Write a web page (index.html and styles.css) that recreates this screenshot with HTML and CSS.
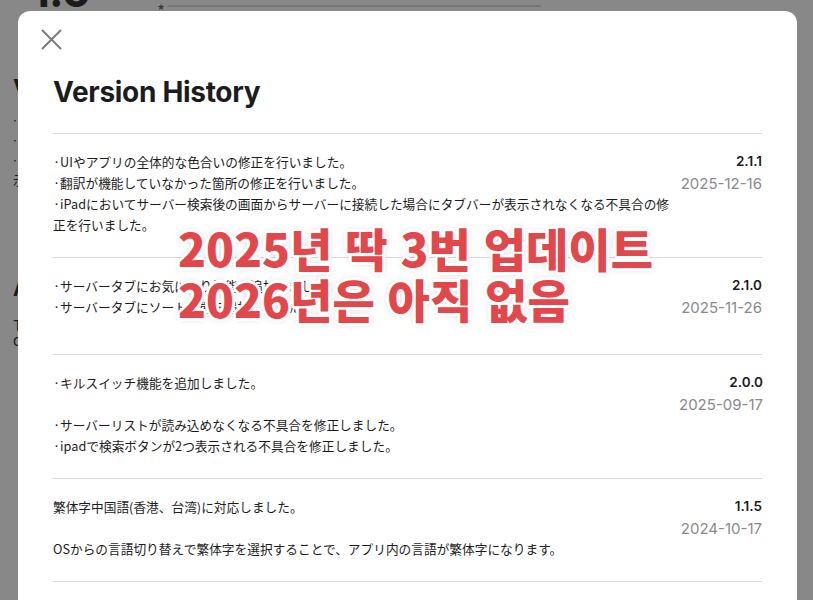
FILE: index.html
```html
<!DOCTYPE html>
<html lang="ja">
<head>
<meta charset="utf-8">
<title>Version History</title>
<link rel="stylesheet" href="styles.css">
</head>
<body>
  <div class="bg-page">
    <div class="bg-stats">
      <div class="bg-rating">1.0</div>
      <div class="bg-star">★</div>
      <div class="bg-bar"></div>
    </div>
    <div class="bg-body">
      <h2 class="bg-heading">Version History</h2>
      <div class="bg-text">·</div>
      <div class="bg-text">·</div>
      <div class="bg-text">·</div>
      <div class="bg-text">示</div>
      <h2 class="bg-heading bg-heading--app">App Privacy</h2>
      <div class="bg-text bg-text--lg">The developer</div>
      <div class="bg-text bg-text--lg">data</div>
    </div>
  </div>

  <div class="sheet">
    <button class="close" aria-label="Close">
      <svg width="21" height="21" viewBox="0 0 21 21"><path d="M1.5 1.5 L19.5 19.5 M19.5 1.5 L1.5 19.5" stroke="#7b7b7b" stroke-width="2" stroke-linecap="round" fill="none"/></svg>
    </button>
    <h1 class="title">Version History</h1>
    <div class="list">
      <div class="row">
        <div class="notes">·UIやアプリの全体的な色合いの修正を行いました。
·翻訳が機能していなかった箇所の修正を行いました。
·iPadにおいてサーバー検索後の画面からサーバーに接続した場合にタブバーが表示されなくなる不具合の修正を行いました。</div>
        <div class="meta"><div class="ver">2.1.1</div><div class="date">2025-12-16</div></div>
      </div>
      <div class="row row--tight">
        <div class="notes">·サーバータブにお気に入り機能を追加しました。
·サーバータブにソート機能を追加しました。
&nbsp;</div>
        <div class="meta"><div class="ver">2.1.0</div><div class="date">2025-11-26</div></div>
      </div>
      <div class="row">
        <div class="notes">·キルスイッチ機能を追加しました。

·サーバーリストが読み込めなくなる不具合を修正しました。
·ipadで検索ボタンが2つ表示される不具合を修正しました。</div>
        <div class="meta"><div class="ver">2.0.0</div><div class="date">2025-09-17</div></div>
      </div>
      <div class="row">
        <div class="notes">繁体字中国語(香港、台湾)に対応しました。

OSからの言語切り替えで繁体字を選択することで、アプリ内の言語が繁体字になります。</div>
        <div class="meta"><div class="ver">1.1.5</div><div class="date">2024-10-17</div></div>
      </div>
      <div class="row">
        <div class="notes">·パフォーマンスを改善しました。</div>
        <div class="meta"><div class="ver">1.1.4</div><div class="date">2024-08-02</div></div>
      </div>
    </div>
  </div>

  <div class="caption" lang="ko">
    <div>2025년 딱 3번 업데이트</div>
    <div>2026년은 아직 없음</div>
  </div>
</body>
</html>
```

FILE: styles.css
```css
* { box-sizing: border-box; }

html, body {
  margin: 0;
  height: 100%;
}

body {
  background: #888888;
  overflow: hidden;
  position: relative;
  font-family: "Noto Sans CJK JP", sans-serif;
}

/* dimmed page behind the sheet */
.bg-page {
  color: #1b1b1b;
  font-family: Inter, "Noto Sans CJK JP", sans-serif;
}

.bg-stats {
  display: flex;
  align-items: flex-start;
  height: 14px;
  padding-left: 31px;
}

.bg-rating {
  font: 700 44px/44px Inter, sans-serif;
  margin-top: -31px;
  width: 66px;
  letter-spacing: -1px;
}

.bg-star {
  font: 9px/9px "DejaVu Sans", sans-serif;
  color: #3a3a3a;
  margin: 3px 0 0 60px;
}

.bg-bar {
  width: 373px;
  height: 2px;
  background: #767676;
  margin: 5px 0 0 3px;
  border-radius: 1px;
}

.bg-body {
  padding-left: 13px;
}

.bg-heading {
  margin: 60px 0 6px;
  font: 700 24px/30px Inter, sans-serif;
}

.bg-heading--app {
  margin: 84px 0 14px;
  font-size: 20px;
}

.bg-text {
  font-size: 13px;
  line-height: 20px;
}

.bg-text--lg {
  font-size: 15px;
  line-height: 15px;
}

/* modal sheet */
.sheet {
  position: absolute;
  left: 18px;
  top: 11px;
  width: 779px;
  bottom: -40px;
  background: #ffffff;
  border-radius: 12px 12px 0 0;
  padding: 18px 35px 0;
}

.close {
  display: block;
  margin-left: -12px;
  padding: 0;
  border: 0;
  background: none;
  width: 21px;
  height: 21px;
}

.close svg { display: block; }

.title {
  margin: 25px 0 0;
  font: 700 28px/34px Inter, sans-serif;
  letter-spacing: -0.3px;
  color: #1c1c1e;
}

.list {
  margin-top: 24px;
  border-top: 1px solid #d9d9d9;
}

.row {
  display: flex;
  justify-content: space-between;
  padding: 17px 0 22px;
  border-bottom: 1px solid #d9d9d9;
}

.row--tight { padding-bottom: 16px; }

.notes {
  width: 626px;
  flex: none;
  font-size: 12.7px;
  line-height: 21px;
  color: #1c1c1e;
  white-space: pre-line;
}

.meta {
  flex: none;
  text-align: right;
  white-space: nowrap;
  font-family: Inter, sans-serif;
}

.ver {
  font-weight: 600;
  font-size: 13.5px;
  line-height: 21px;
  color: #1c1c1e;
}

.date {
  font-size: 15px;
  line-height: 23px;
  color: #8a8a8e;
}

/* red caption overlaid on the screenshot */
.caption {
  position: absolute;
  left: 178px;
  top: 222px;
  font-family: "Noto Sans CJK KR", sans-serif;
  font-weight: 900;
  font-size: 46px;
  line-height: 51px;
  color: #e2474c;
  white-space: nowrap;
  text-shadow:
    3px 0 #fff, -3px 0 #fff, 0 3px #fff, 0 -3px #fff,
    2px 2px #fff, -2px -2px #fff, 2px -2px #fff, -2px 2px #fff,
    0 0 7px rgba(0, 0, 0, 0.28);
}
```
